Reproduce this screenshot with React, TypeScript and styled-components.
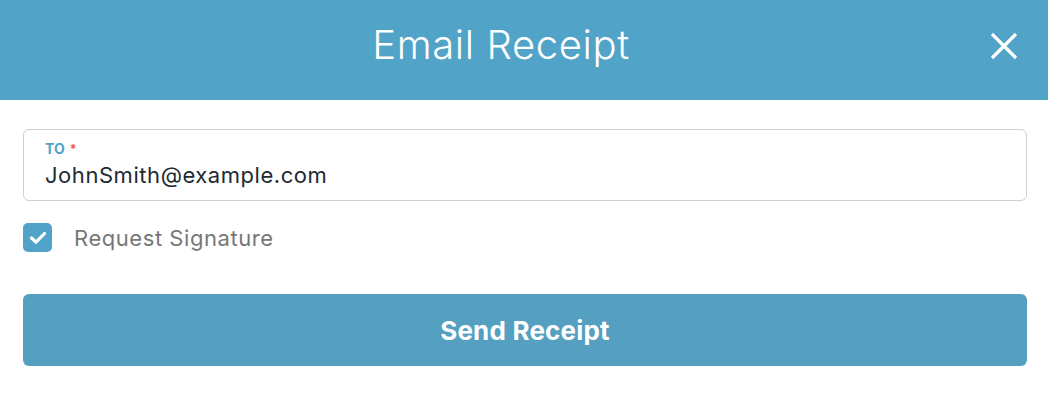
import React from 'react';
import styled, { createGlobalStyle } from 'styled-components';

const GlobalStyle = createGlobalStyle`
    html, body {
        margin: 0;
        padding: 0;
        background: #ffffff;
        font-family: Inter, "Open Sans", sans-serif;
    }
`;

const Modal = styled.div`
    width: 1048px;
    height: 408px;
    display: flex;
    flex-direction: column;
    background: #ffffff;
`;

const Header = styled.header`
    position: relative;
    height: 100px;
    box-sizing: border-box;
    padding-right: 46px;
    background: #51a3c8;
    display: flex;
    align-items: center;
    justify-content: center;
`;

const Title = styled.h1`
    margin: 0 0 12px;
    color: #ffffff;
    font-size: 40px;
    font-weight: 300;
    letter-spacing: 0.6px;
`;

const CloseButton = styled.button`
    position: absolute;
    right: 28px;
    top: 30px;
    width: 32px;
    height: 32px;
    padding: 0;
    border: none;
    background: transparent;
    cursor: pointer;
    display: flex;
    align-items: center;
    justify-content: center;
`;

const Body = styled.div`
    padding: 29px 21px 0 23px;
    display: flex;
    flex-direction: column;
`;

const Field = styled.label`
    display: flex;
    flex-direction: column;
    height: 72px;
    box-sizing: border-box;
    border: 1px solid #cfcfcf;
    border-radius: 6px;
    padding: 11px 21px 0;
`;

const FieldLabel = styled.span`
    font-size: 14px;
    font-weight: 700;
    color: #51a3c8;
    line-height: 16px;
`;

const Required = styled.span`
    color: #e0506a;
    margin-left: 5px;
    font-size: 12px;
    vertical-align: top;
`;

const FieldValue = styled.span`
    margin-top: 4px;
    font-size: 22px;
    letter-spacing: 0.55px;
    color: #222a33;
    line-height: 28px;
`;

const CheckRow = styled.div`
    display: flex;
    align-items: center;
    gap: 22px;
    margin-top: 22px;
`;

const Checkbox = styled.span`
    width: 29px;
    height: 29px;
    border-radius: 5px;
    background: #51a3c8;
    display: flex;
    align-items: center;
    justify-content: center;
`;

const CheckLabel = styled.span`
    font-size: 22px;
    letter-spacing: 0.55px;
    color: #777777;
`;

const SendButton = styled.button`
    margin-top: 42px;
    height: 72px;
    border: none;
    border-radius: 6px;
    background: #55a0c0;
    color: #ffffff;
    font-family: Inter, "Open Sans", sans-serif;
    font-size: 26px;
    font-weight: 700;
    letter-spacing: 0.2px;
    cursor: pointer;
`;

export default () => {
    return (
        <>
            <GlobalStyle />
            <Modal>
                <Header>
                    <Title>Email Receipt</Title>
                    <CloseButton aria-label='Close'>
                        <svg width='28' height='28' viewBox='0 0 28 28'>
                            <path d='M2 2 L26 26 M26 2 L2 26' stroke='#ffffff' strokeWidth='3.2' />
                        </svg>
                    </CloseButton>
                </Header>
                <Body>
                    <Field>
                        <FieldLabel>
                            TO<Required>*</Required>
                        </FieldLabel>
                        <FieldValue>JohnSmith@example.com</FieldValue>
                    </Field>
                    <CheckRow>
                        <Checkbox>
                            <svg width='18' height='14' viewBox='0 0 18 14'>
                                <path d='M2.5 7 L7 11.2 L15.5 2.5' fill='none' stroke='#ffffff' strokeWidth='3.2' strokeLinecap='round' strokeLinejoin='round' />
                            </svg>
                        </Checkbox>
                        <CheckLabel>Request Signature</CheckLabel>
                    </CheckRow>
                    <SendButton>Send Receipt</SendButton>
                </Body>
            </Modal>
        </>
    );
};
